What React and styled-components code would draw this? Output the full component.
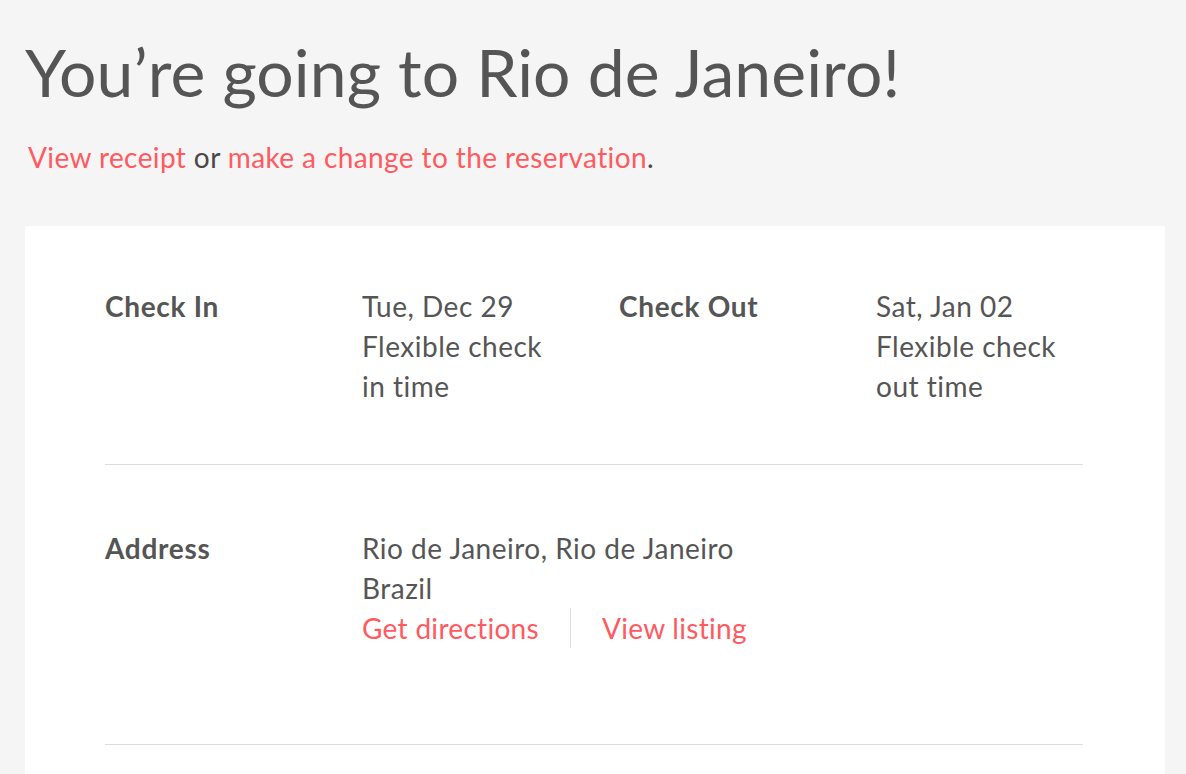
import React from 'react';
import styled, { createGlobalStyle } from 'styled-components';

const GlobalStyle = createGlobalStyle`
  body {
    margin: 0;
    background: #f5f5f5;
    font-family: Lato, "Open Sans", sans-serif;
    color: #565a5c;
  }
`;

const Page = styled.div`
  padding: 32px 21px 0 25px;
`;

const Title = styled.h1`
  margin: 0;
  font-size: 66px;
  font-weight: 400;
  line-height: 80px;
  color: #555555;
  letter-spacing: 0.1px;
`;

const Links = styled.p`
  margin: 29px 0 0 3px;
  font-size: 28px;
  line-height: 32px;
  letter-spacing: 0.4px;
  color: #484848;
`;

const Link = styled.a`
  color: #ff5a5f;
  text-decoration: none;
`;

const Card = styled.div`
  margin-top: 53px;
  background: #ffffff;
  padding: 0 82px 0 80px;
`;

const Row = styled.div`
  display: grid;
  grid-template-columns: repeat(4, 207px);
  column-gap: 50px;
  padding: ${p => p.$pad};
  border-bottom: 1px solid #dddddd;
`;

const Label = styled.div`
  font-size: 28px;
  line-height: 40px;
  font-weight: 700;
  letter-spacing: 0.7px;
  color: #555555;
`;

const Value = styled.div`
  font-size: 28px;
  line-height: 40px;
  letter-spacing: 0.5px;
  color: #555555;
  max-width: ${p => p.$max || 'none'};
  grid-column: ${p => p.$span || 'auto'};
`;

const Actions = styled.div`
  display: flex;
  align-items: center;
  letter-spacing: 0.3px;
`;

const Action = styled(Link)`
  padding: 0 31px 0 31px;
  border-left: 1px solid #dddddd;
  &:first-child {
    padding-left: 0;
    border-left: none;
  }
`;

export default function App() {
  return (
    <>
      <GlobalStyle />
      <Page>
        <Title>You’re going to Rio de Janeiro!</Title>
        <Links>
          <Link href="#">View receipt</Link> or <Link href="#">make a change to the reservation</Link>.
        </Links>
        <Card>
          <Row $pad="60px 0 58px">
            <Label>Check In</Label>
            <Value $max="195px">Tue, Dec 29<br />Flexible check in time</Value>
            <Label>Check Out</Label>
            <Value $max="195px">Sat, Jan 02<br />Flexible check out time</Value>
          </Row>
          <Row $pad="63px 0 96px">
            <Label>Address</Label>
            <Value $span="2 / 5">
              Rio de Janeiro, Rio de Janeiro<br />Brazil
              <Actions>
                <Action href="#">Get directions</Action>
                <Action href="#">View listing</Action>
              </Actions>
            </Value>
          </Row>
          <Row $pad="60px 0" />
        </Card>
      </Page>
    </>
  );
}
